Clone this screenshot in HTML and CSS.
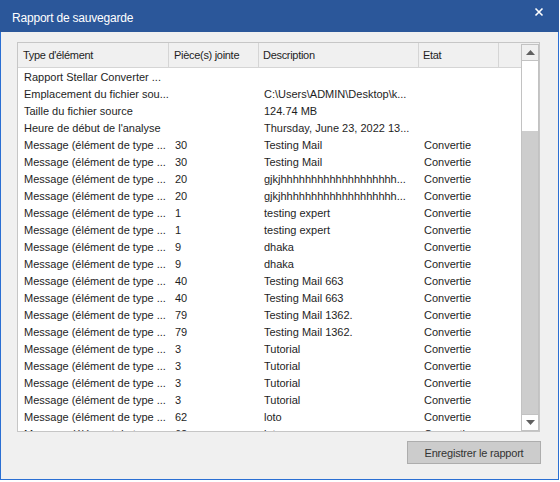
FILE: index.html
```html
<!DOCTYPE html>
<html lang="fr">
<head>
<meta charset="utf-8">
<title>Rapport de sauvegarde</title>
<link rel="stylesheet" href="styles.css">
</head>
<body>
<div class="window">
  <div class="titlebar">
    <span class="title">Rapport de sauvegarde</span>
    <svg class="close" width="10" height="10" viewBox="0 0 10 10"><path d="M1.5 1.5 L8.5 8.5 M8.5 1.5 L1.5 8.5" stroke="#fff" stroke-width="1.6" fill="none"/></svg>
  </div>
  <div class="body">
    <div class="listbox">
      <div class="list">
        <div class="row head">
          <div class="c">Type d'élément</div>
          <div class="c">Pièce(s) jointe</div>
          <div class="c">Description</div>
          <div class="c">Etat</div>
          <div class="c"></div>
        </div>
        <div class="rows">
          <div class="row"><div class="c">Rapport Stellar Converter ...</div><div class="c"></div><div class="c"></div><div class="c"></div></div>
          <div class="row"><div class="c">Emplacement du fichier sou...</div><div class="c"></div><div class="c">C:\Users\ADMIN\Desktop\k...</div><div class="c"></div></div>
          <div class="row"><div class="c">Taille du fichier source</div><div class="c"></div><div class="c">124.74 MB</div><div class="c"></div></div>
          <div class="row"><div class="c">Heure de début de l'analyse</div><div class="c"></div><div class="c">Thursday, June 23, 2022 13...</div><div class="c"></div></div>
          <div class="row"><div class="c">Message (élément de type ...</div><div class="c">30</div><div class="c">Testing Mail</div><div class="c">Convertie</div></div>
          <div class="row"><div class="c">Message (élément de type ...</div><div class="c">30</div><div class="c">Testing Mail</div><div class="c">Convertie</div></div>
          <div class="row"><div class="c">Message (élément de type ...</div><div class="c">20</div><div class="c">gjkjhhhhhhhhhhhhhhhhhhh...</div><div class="c">Convertie</div></div>
          <div class="row"><div class="c">Message (élément de type ...</div><div class="c">20</div><div class="c">gjkjhhhhhhhhhhhhhhhhhhh...</div><div class="c">Convertie</div></div>
          <div class="row"><div class="c">Message (élément de type ...</div><div class="c">1</div><div class="c">testing expert</div><div class="c">Convertie</div></div>
          <div class="row"><div class="c">Message (élément de type ...</div><div class="c">1</div><div class="c">testing expert</div><div class="c">Convertie</div></div>
          <div class="row"><div class="c">Message (élément de type ...</div><div class="c">9</div><div class="c">dhaka</div><div class="c">Convertie</div></div>
          <div class="row"><div class="c">Message (élément de type ...</div><div class="c">9</div><div class="c">dhaka</div><div class="c">Convertie</div></div>
          <div class="row"><div class="c">Message (élément de type ...</div><div class="c">40</div><div class="c">Testing Mail 663</div><div class="c">Convertie</div></div>
          <div class="row"><div class="c">Message (élément de type ...</div><div class="c">40</div><div class="c">Testing Mail 663</div><div class="c">Convertie</div></div>
          <div class="row"><div class="c">Message (élément de type ...</div><div class="c">79</div><div class="c">Testing Mail 1362.</div><div class="c">Convertie</div></div>
          <div class="row"><div class="c">Message (élément de type ...</div><div class="c">79</div><div class="c">Testing Mail 1362.</div><div class="c">Convertie</div></div>
          <div class="row"><div class="c">Message (élément de type ...</div><div class="c">3</div><div class="c">Tutorial</div><div class="c">Convertie</div></div>
          <div class="row"><div class="c">Message (élément de type ...</div><div class="c">3</div><div class="c">Tutorial</div><div class="c">Convertie</div></div>
          <div class="row"><div class="c">Message (élément de type ...</div><div class="c">3</div><div class="c">Tutorial</div><div class="c">Convertie</div></div>
          <div class="row"><div class="c">Message (élément de type ...</div><div class="c">3</div><div class="c">Tutorial</div><div class="c">Convertie</div></div>
          <div class="row"><div class="c">Message (élément de type ...</div><div class="c">62</div><div class="c">loto</div><div class="c">Convertie</div></div>
          <div class="row"><div class="c">Message (élément de type ...</div><div class="c">62</div><div class="c">loto</div><div class="c">Convertie</div></div>
        </div>
      </div>
      <div class="scrollbar">
        <div class="arrow up"><svg width="9" height="5" viewBox="0 0 9 5"><path d="M0 5 L4.5 0 L9 5 Z" fill="#606060"/></svg></div>
        <div class="thumb"></div>
        <div class="track"></div>
        <div class="arrow down"><svg width="9" height="5" viewBox="0 0 9 5"><path d="M0 0 L9 0 L4.5 5 Z" fill="#606060"/></svg></div>
      </div>
    </div>
    <div class="actions">
      <button class="btn">Enregistrer le rapport</button>
    </div>
  </div>
</div>
</body>
</html>
```

FILE: styles.css
```css
* { box-sizing: border-box; }
html, body { margin: 0; padding: 0; background: #ffffff; }
body { font-family: "Liberation Sans", Arial, sans-serif; font-size: 11px; color: #1e1e1e; }

.window { width: 559px; height: 480px; display: flex; flex-direction: column; }

.titlebar {
  height: 32px; background: #2b579a; color: #fff;
  display: flex; align-items: center; justify-content: space-between;
  padding: 3px 15px 0 12px;
}
.title { font-size: 12px; letter-spacing: -0.2px; }
.close { margin-top: -11px; }

.body {
  flex: 1; background: #f0f0f0;
  border: 1px solid #2a6fd3; border-top: none;
  padding: 10px 0 0 16px;
  display: flex; flex-direction: column;
}

.listbox {
  width: 523px; height: 390px;
  border: 1px solid #c6c6c6; background: #fff;
  display: flex; overflow: hidden;
}
.list { width: 503px; display: flex; flex-direction: column; overflow: hidden; }

.row {
  display: grid;
  grid-template-columns: 151px 90px 160px 80px 22px;
  height: 17px; align-items: center;
}
.row .c { white-space: nowrap; overflow: hidden; padding-left: 6px; }
.row .c:nth-child(3), .row .c:nth-child(4) { padding-left: 5px; }

.head { height: 25px; background: #f0f0f0; border-bottom: 1px solid #d5d5d5; align-items: stretch; }
.head .c { border-right: 1px solid #d5d5d5; display: flex; align-items: center; padding-left: 5px; color: #1e1e1e; letter-spacing: -0.3px; }
.head .c:nth-child(3), .head .c:nth-child(4) { padding-left: 4px; }
.head .c:last-child { border-right: none; }

.rows { flex: 1; overflow: hidden; }

.scrollbar {
  width: 18px; padding-top: 1px;
  display: flex; flex-direction: column;
  background: #f0f0f0;
}
.arrow {
  height: 17px; background: #fff;
  border: 1px solid #c2c2c2;
  display: flex; align-items: center; justify-content: center;
}
.arrow.up { background: #f0f0f0; }
.thumb { height: 70px; background: #fff; border-left: 1px solid #c2c2c2; border-right: 1px solid #c2c2c2; }
.track { flex: 1; background: #cdcdcd; border-left: 1px solid #c2c2c2; border-right: 1px solid #c2c2c2; }

.actions { display: flex; justify-content: flex-end; padding: 9px 17px 0 0; }
.btn {
  width: 134px; height: 23px;
  background: #cccccc; border: 1px solid #adadad;
  font-family: "Liberation Sans", Arial, sans-serif; font-size: 11px; color: #333;
  letter-spacing: -0.2px;
  padding: 0;
}
```
